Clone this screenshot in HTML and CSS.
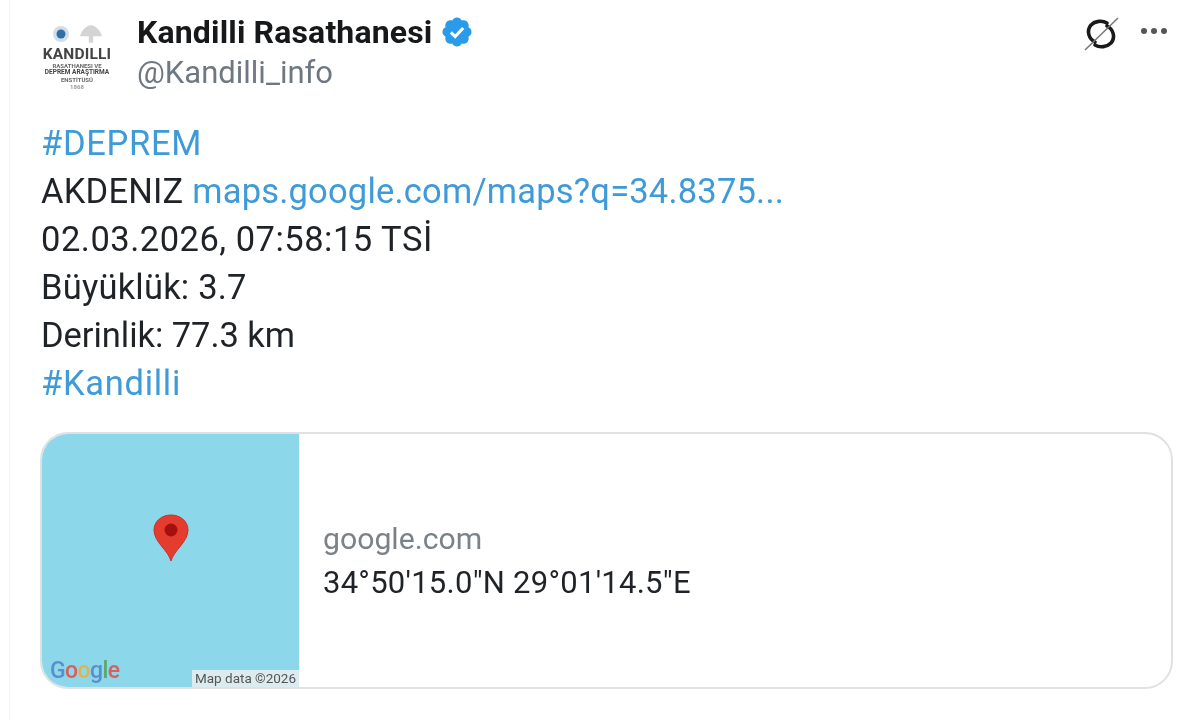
FILE: index.html
```html
<!DOCTYPE html>
<html lang="tr">
<head>
    <meta charset="UTF-8">
    <meta name="viewport" content="width=device-width, initial-scale=1.0">
    <title>Kandilli Rasathanesi</title>
    <link rel="stylesheet" href="styles.css">
</head>
<body>
    <div class="tweet">
        <div class="header">
            <div class="logo">
                <div class="logo-icons">
                    <svg width="18" height="18" viewBox="0 0 18 18">
                        <circle cx="9" cy="9" r="8" fill="#d3dde6"/>
                        <circle cx="9" cy="9" r="4.500" fill="#2f6fa8"/>
                    </svg>
                    <svg width="24" height="20" viewBox="0 0 22 18">
                        <path d="M11 1 C15 1 20 6 21 11 L13 11 L13 17 L9 17 L9 11 L1 11 C2 6 7 1 11 1 Z" fill="#d4d4d4"/>
                    </svg>
                </div>
                <div class="logo-name">KANDILLI</div>
                <div class="logo-line">RASATHANESI VE</div>
                <div class="logo-line logo-wide">DEPREM ARAŞTIRMA</div>
                <div class="logo-line">ENSTİTÜSÜ</div>
                <div class="logo-line logo-year">1868</div>
            </div>
            <div class="names">
                <div class="name-row">
                    <span class="name">Kandilli Rasathanesi</span>
                    <svg class="badge" width="34" height="34" viewBox="0 0 22 22">
                        <path fill="#2a9be8" d="M20.4 11c0-1.3-.8-2.5-2-3 .4-1.300.1-2.700-.8-3.600-.9-.9-2.300-1.200-3.600-.8-.5-1.200-1.700-2-3-2s-2.500.8-3 2c-1.300-.4-2.700-.1-3.600.8-.9.9-1.200 2.300-.8 3.600-1.200.5-2 1.700-2 3s.8 2.500 2 3c-.4 1.300-.1 2.700.8 3.600.9.9 2.300 1.200 3.600.8.5 1.200 1.700 2 3 2s2.500-.8 3-2c1.300.4 2.700.1 3.600-.8.9-.9 1.200-2.300.8-3.600 1.200-.5 2-1.700 2-3z"/>
                        <path fill="none" stroke="#fff" stroke-width="2" d="M7 11.300l2.800 2.700 5.200-5.600"/>
                    </svg>
                </div>
                <div class="handle">@Kandilli_info</div>
            </div>
            <div class="actions">
                <svg width="38" height="38" viewBox="0 0 38 38">
                    <path fill="none" stroke="#1a1a1a" stroke-width="3.600" stroke-linecap="round" d="M13 27 C7 24 4 16 9 10 C13 6 20 5 25 8 M25 11 C31 14 34 22 29 28 C25 32 18 33 13 30"/>
                    <path stroke="#777" stroke-width="1.500" d="M3 35 L36 3"/>
                </svg>
                <div class="dots"><span></span><span></span><span></span></div>
            </div>
        </div>
        <div class="text">
            <div class="wide"><a>#DEPREM</a></div>
            <div>AKDENIZ <a>maps.google.com/maps?q=34.8375...</a></div>
            <div class="date">02.03.2026, 07:58:15 TSİ</div>
            <div>Büyüklük: 3.7</div>
            <div class="tight">Derinlik: 77.3 km</div>
            <div class="wide"><a>#Kandilli</a></div>
        </div>
        <div class="card">
            <div class="map">
                <svg class="pin" width="36" height="48" viewBox="0 0 36 48">
                    <path d="M18 47 C15 36 1 28 1 16 C1 7 9 1 18 1 C27 1 35 7 35 16 C35 28 21 36 18 47 Z" fill="#e53c30" stroke="#c9302a" stroke-width="1"/>
                    <circle cx="18" cy="16" r="6.500" fill="#a5100e"/>
                </svg>
                <div class="google"><span class="g-blue">G</span><span class="g-red">o</span><span class="g-yellow">o</span><span class="g-blue">g</span><span class="g-green">l</span><span class="g-red">e</span></div>
                <div class="map-data">Map data ©2026</div>
            </div>
            <div class="card-info">
                <div class="domain">google.com</div>
                <div class="coords">34°50'15.0"N 29°01'14.5"E</div>
            </div>
        </div>
    </div>
</body>
</html>
```

FILE: styles.css
```css
body {
    margin: 0;
    height: 720px;
    overflow: hidden;
    background-color: #ffffff;
    font-family: Roboto, "Open Sans", sans-serif;
    color: #1f2327;
}
.tweet {
    margin-left: 9px;
    height: 720px;
    padding: 14px 21px 0 31px;
    border-left: 1px solid #f1f3f4;
    box-sizing: border-box;
    filter: blur(0.4px);
}
.header {
    display: flex;
    height: 84px;
}
.logo {
    width: 72px;
    padding-top: 8px;
    margin-right: 24px;
    text-align: center;
    overflow: hidden;
    flex-shrink: 0;
    filter: blur(0.6px);
}
.logo-icons {
    display: flex;
    justify-content: center;
    align-items: center;
    gap: 9px;
    height: 24px;
}
.logo-name {
    font-size: 15.5px;
    line-height: 16px;
    font-weight: 700;
    letter-spacing: 0.2px;
    color: #444;
}
.logo-line {
    font-size: 6px;
    line-height: 7px;
    font-weight: 700;
    white-space: nowrap;
    color: #666;
}
.logo-wide {
    font-size: 6.5px;
    color: #444;
}
.logo-year {
    color: #999;
}
.names {
    flex: 1;
}
.name-row {
    display: flex;
    align-items: center;
    height: 36px;
}
.name {
    font-size: 32px;
    font-weight: 700;
    letter-spacing: 0.15px;
    color: #16181a;
}
.badge {
    margin-left: 8px;
}
.handle {
    margin-top: 2px;
    font-size: 31px;
    line-height: 42px;
    color: #6f7880;
}
.actions {
    display: flex;
    align-items: flex-start;
    gap: 21px;
    padding-top: 1px;
    margin-right: 5px;
}
.dots {
    display: flex;
    gap: 4px;
    margin-top: 13px;
}
.dots span {
    width: 6px;
    height: 6px;
    border-radius: 50%;
    background-color: #555;
}
.text {
    margin-top: 21px;
    font-size: 34.5px;
    line-height: 48px;
    letter-spacing: 0.2px;
    white-space: nowrap;
}
.text a {
    color: #3e9bd8;
}
.text .wide {
    letter-spacing: 0.7px;
}
.text .date {
    letter-spacing: 0.5px;
}
.text .tight {
    letter-spacing: -0.05px;
}
.card {
    display: flex;
    margin: 25px -1px 0;
    height: 257px;
    border: 2px solid #dfe2e4;
    border-radius: 28px;
    overflow: hidden;
    box-sizing: border-box;
}
.map {
    position: relative;
    width: 257px;
    background-color: #8dd7ea;
    flex-shrink: 0;
}
.pin {
    position: absolute;
    left: 111px;
    top: 80px;
}
.google {
    position: absolute;
    left: 8px;
    bottom: 2px;
    font-size: 23px;
    font-weight: 500;
    letter-spacing: -0.6px;
    line-height: 28px;
}
.g-blue { color: #5b8ecf; }
.g-red { color: #d9605a; }
.g-yellow { color: #e0b44c; }
.g-green { color: #5ba86a; }
.map-data {
    position: absolute;
    right: 0;
    bottom: 0;
    width: 107px;
    text-align: center;
    background-color: rgba(240, 240, 240, 0.8);
    font-size: 13.5px;
    line-height: 17px;
    color: #555;
    white-space: nowrap;
}
.card-info {
    display: flex;
    flex-direction: column;
    justify-content: center;
    padding-left: 24px;
}
.domain {
    font-size: 30.2px;
    line-height: 44px;
    color: #7a8288;
}
.coords {
    font-size: 31px;
    line-height: 44px;
    letter-spacing: 0.25px;
    color: #1f2327;
}
```
